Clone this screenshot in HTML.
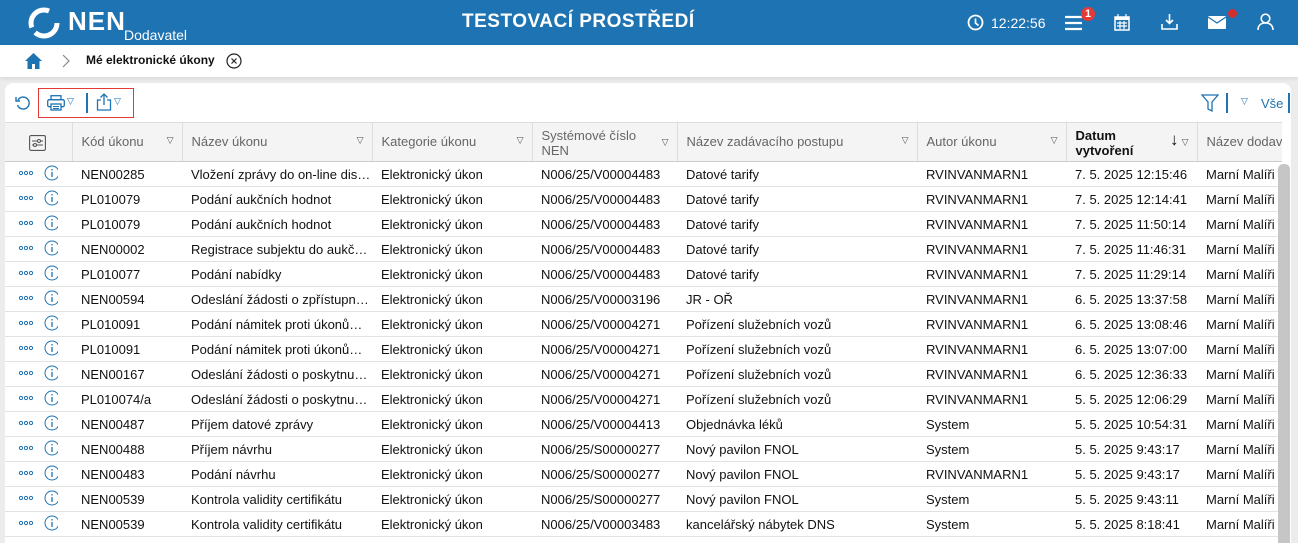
<!DOCTYPE html><html><head><meta charset="utf-8"><style>
*{box-sizing:border-box;margin:0;padding:0}
body{width:1298px;height:535px;overflow:hidden;background:#ececec;font-family:"Liberation Sans","DejaVu Sans",sans-serif;font-size:13px;color:#111;position:relative}
.hdr{position:absolute;left:0;top:0;width:1298px;height:45px;background:#1e73b2;color:#fff}
.bc{position:absolute;left:0;top:45px;width:1298px;height:32px;background:#fff;box-shadow:0 2px 4px rgba(0,0,0,.08)}
.card{position:absolute;left:5px;top:83px;width:1286px;height:460px;background:#fff;border-radius:8px 8px 0 0;overflow:hidden}
table{border-collapse:collapse;table-layout:fixed;position:absolute;left:0;top:39px}
td,th{height:25px;border-bottom:1px solid #e2e2e2;white-space:nowrap;overflow:hidden;padding-left:9px;text-align:left;font-weight:normal}
th{height:39px;background:#f4f4f4;color:#666;border-right:1px solid #ddd;border-top:1px solid #ddd;border-bottom:1px solid #ccc;position:relative;font-size:13px;padding-bottom:2px}
th .t{position:absolute;right:8px;top:12px;font-size:9px;color:#555}
.sb{position:absolute;left:1273px;top:81px;width:12px;height:400px;background:#c6c6c6;border-radius:5px}
</style></head><body>
<div class="hdr">
<svg style="position:absolute;left:27px;top:7px" width="34" height="32" viewBox="0 0 34 32"><circle cx="17" cy="16" r="13" fill="none" stroke="#fff" stroke-width="5" stroke-dasharray="30 6 30 16"/></svg>
<div style="position:absolute;left:68px;top:6px;font-size:26px;font-weight:bold;letter-spacing:1px">NEN</div>
<div style="position:absolute;left:124px;top:27px;font-size:14px">Dodavatel</div>
<div style="position:absolute;left:462px;top:11px;font-size:19px;font-weight:bold;letter-spacing:.5px">TESTOVACÍ PROSTŘEDÍ</div>
<svg style="position:absolute;left:967px;top:14px" width="17" height="17" viewBox="0 0 17 17"><circle cx="8.5" cy="8.5" r="7" fill="none" stroke="#fff" stroke-width="1.8"/><path d="M8.5 4.5v4.5l3 2.5" stroke="#fff" stroke-width="1.7" fill="none"/></svg>
<div style="position:absolute;left:991px;top:15px;font-size:14px">12:22:56</div>
<svg style="position:absolute;left:1065px;top:15px" width="18" height="16"><path d="M0 2h17M0 8h17M0 14h17" stroke="#fff" stroke-width="2.2"/></svg>
<div style="position:absolute;left:1081px;top:7px;width:14px;height:14px;border-radius:7px;background:#e53935;font-size:11px;text-align:center;line-height:14px;font-weight:bold">1</div>
<svg style="position:absolute;left:1114px;top:14px" width="16" height="17"><rect x="1" y="3" width="14" height="13" fill="none" stroke="#fff" stroke-width="1.5"/><rect x="1" y="3" width="14" height="3" fill="#fff"/><path d="M4 0v4M12 0v4M3 9h10M3 12h10M6 7v8M10 7v8" stroke="#fff" stroke-width="1.2"/></svg>
<svg style="position:absolute;left:1161px;top:13px" width="17" height="18"><path d="M8.5 1v9M5 7l3.5 3.5L12 7M1 11v5h15v-5" stroke="#fff" stroke-width="1.6" fill="none"/></svg>
<svg style="position:absolute;left:1208px;top:16px" width="18" height="13"><rect x="0" y="0" width="18" height="13" rx="1" fill="#fff"/><path d="M0 1l9 6 9-6" stroke="#1e73b2" stroke-width="1.3" fill="none"/></svg>
<div style="position:absolute;left:1228px;top:9px;width:9px;height:9px;border-radius:5px;background:#d32f2f"></div>
<svg style="position:absolute;left:1257px;top:13px" width="17" height="18"><circle cx="8.5" cy="5.5" r="4.3" fill="none" stroke="#fff" stroke-width="1.6"/><path d="M1 17c0-5 3.5-7 7.5-7s7.5 2 7.5 7" fill="none" stroke="#fff" stroke-width="1.6"/></svg>
</div>
<div class="bc">
<svg style="position:absolute;left:25px;top:8px" width="17" height="16"><path d="M8.5 0L0 8h2.5v8h4.5v-5h3v5h4.5V8H17z" fill="#1e73b2"/></svg>
<svg style="position:absolute;left:62px;top:9px" width="8" height="14"><path d="M1 1l6 6-6 6" stroke="#888" stroke-width="1.2" fill="none"/></svg>
<div style="position:absolute;left:86px;top:8px;font-size:12px;font-weight:bold">Mé elektronické úkony</div>
<svg style="position:absolute;left:226px;top:8px" width="16" height="16"><circle cx="8" cy="8" r="7" fill="none" stroke="#222" stroke-width="1.2"/><path d="M5.5 5.5l5 5M10.5 5.5l-5 5" stroke="#222" stroke-width="1.2"/></svg>
</div>
<div class="card">
<svg style="position:absolute;left:10px;top:12px" width="16" height="16"><path d="M3 5A6 6 0 1 1 2.5 10" fill="none" stroke="#1e73b2" stroke-width="1.4"/><path d="M1 2v4h4" fill="none" stroke="#1e73b2" stroke-width="1.4"/></svg>
<div style="position:absolute;left:33px;top:5px;width:96px;height:30px;border:1px solid #e53935"></div>
<svg style="position:absolute;left:42px;top:12px" width="18" height="16"><rect x="4" y="0.7" width="10" height="4" fill="none" stroke="#1e73b2" stroke-width="1.3"/><rect x="0.7" y="4.7" width="16.6" height="7" rx="1.5" fill="none" stroke="#1e73b2" stroke-width="1.3"/><rect x="4" y="9" width="10" height="6" fill="#fff" stroke="#1e73b2" stroke-width="1.3"/><path d="M6 11.5h6M6 13.5h6" stroke="#1e73b2"/></svg>
<div style="position:absolute;left:62px;top:13px;font-size:9px;color:#1e73b2">▽</div>
<div style="position:absolute;left:81px;top:10px;width:1.5px;height:20px;background:#1e73b2"></div>
<svg style="position:absolute;left:91px;top:10px" width="16" height="18"><path d="M5 7H1.5v10h13V7H11M8 12V1M4.5 4.5L8 1l3.5 3.5" fill="none" stroke="#1e73b2" stroke-width="1.3"/></svg>
<div style="position:absolute;left:109px;top:13px;font-size:9px;color:#1e73b2">▽</div>
<svg style="position:absolute;left:1196px;top:11px" width="18" height="18"><path d="M1 1h16l-6 7v9l-4-2V8z" fill="none" stroke="#1e73b2" stroke-width="1.3"/></svg>
<div style="position:absolute;left:1221px;top:10px;width:1.5px;height:20px;background:#1e73b2"></div>
<div style="position:absolute;left:1236px;top:13px;font-size:9px;color:#1e73b2">▽</div>
<div style="position:absolute;left:1256px;top:13px;font-size:13px;color:#1e73b2">Vše</div>
<div style="position:absolute;left:1283px;top:10px;width:1.5px;height:20px;background:#1e73b2"></div>
<table>
<colgroup><col style="width:67px"><col style="width:110px"><col style="width:190px"><col style="width:160px"><col style="width:145px"><col style="width:240px"><col style="width:149px"><col style="width:131px"><col style="width:81px"></colgroup>
<tr><th style="padding:0"><svg style="position:absolute;left:24px;top:12px" width="17" height="16"><rect x="0.6" y="0.6" width="15.8" height="14.8" rx="1.5" fill="none" stroke="#555" stroke-width="1.1"/><path d="M3 6h11M3 10h11" stroke="#555"/><circle cx="10" cy="6" r="1.5" fill="#f4f4f4" stroke="#555"/><circle cx="6" cy="10" r="1.5" fill="#f4f4f4" stroke="#555"/></svg></th>
<th>Kód úkonu<span class="t">▽</span></th><th>Název úkonu<span class="t">▽</span></th><th>Kategorie úkonu<span class="t">▽</span></th><th style="line-height:15px;padding-top:3px">Systémové číslo<br>NEN<span class="t">▽</span></th><th>Název zadávacího postupu<span class="t">▽</span></th><th>Autor úkonu<span class="t">▽</span></th><th style="line-height:15px;padding-top:3px;color:#111;font-weight:bold">Datum<br>vytvoření<span style="position:absolute;right:18px;top:9px;font-size:17px;font-weight:normal">↓</span><span class="t">▽</span></th><th style="border-right:0">Název dodav</th></tr>
<tbody id="b"></tbody></table>
<div class="sb"></div>
</div>
<script>
var r=[["NEN00285","Vložení zprávy do on-line dis…","N006/25/V00004483","Datové tarify","RVINVANMARN1","7. 5. 2025 12:15:46"],
["PL010079","Podání aukčních hodnot","N006/25/V00004483","Datové tarify","RVINVANMARN1","7. 5. 2025 12:14:41"],
["PL010079","Podání aukčních hodnot","N006/25/V00004483","Datové tarify","RVINVANMARN1","7. 5. 2025 11:50:14"],
["NEN00002","Registrace subjektu do aukč…","N006/25/V00004483","Datové tarify","RVINVANMARN1","7. 5. 2025 11:46:31"],
["PL010077","Podání nabídky","N006/25/V00004483","Datové tarify","RVINVANMARN1","7. 5. 2025 11:29:14"],
["NEN00594","Odeslání žádosti o zpřístupn…","N006/25/V00003196","JR - OŘ","RVINVANMARN1","6. 5. 2025 13:37:58"],
["PL010091","Podání námitek proti úkonů…","N006/25/V00004271","Pořízení služebních vozů","RVINVANMARN1","6. 5. 2025 13:08:46"],
["PL010091","Podání námitek proti úkonů…","N006/25/V00004271","Pořízení služebních vozů","RVINVANMARN1","6. 5. 2025 13:07:00"],
["NEN00167","Odeslání žádosti o poskytnu…","N006/25/V00004271","Pořízení služebních vozů","RVINVANMARN1","6. 5. 2025 12:36:33"],
["PL010074/a","Odeslání žádosti o poskytnu…","N006/25/V00004271","Pořízení služebních vozů","RVINVANMARN1","5. 5. 2025 12:06:29"],
["NEN00487","Příjem datové zprávy","N006/25/V00004413","Objednávka léků","System","5. 5. 2025 10:54:31"],
["NEN00488","Příjem návrhu","N006/25/S00000277","Nový pavilon FNOL","System","5. 5. 2025 9:43:17"],
["NEN00483","Podání návrhu","N006/25/S00000277","Nový pavilon FNOL","RVINVANMARN1","5. 5. 2025 9:43:17"],
["NEN00539","Kontrola validity certifikátu","N006/25/S00000277","Nový pavilon FNOL","System","5. 5. 2025 9:43:11"],
["NEN00539","Kontrola validity certifikátu","N006/25/V00003483","kancelářský nábytek DNS","System","5. 5. 2025 8:18:41"]];
var h="";r.forEach(function(x){h+='<tr><td style="padding-left:13px"><svg width="40" height="16"><g fill="none" stroke="#1e73b2" stroke-width="1"><circle cx="3" cy="8" r="1.6"/><circle cx="8" cy="8" r="1.6"/><circle cx="13" cy="8" r="1.6"/><circle cx="34" cy="8" r="7"/></g><path d="M34 7v5" stroke="#1e73b2" stroke-width="1.3"/><circle cx="34" cy="4.8" r="0.8" fill="#1e73b2"/></svg></td><td>'+x[0]+'</td><td style="text-overflow:clip">'+x[1]+'</td><td>Elektronický úkon</td><td>'+x[2]+'</td><td>'+x[3]+'</td><td>'+x[4]+'</td><td>'+x[5]+'</td><td>Marní Malíři</td></tr>'});
document.getElementById("b").innerHTML=h;
</script>
</body></html>
